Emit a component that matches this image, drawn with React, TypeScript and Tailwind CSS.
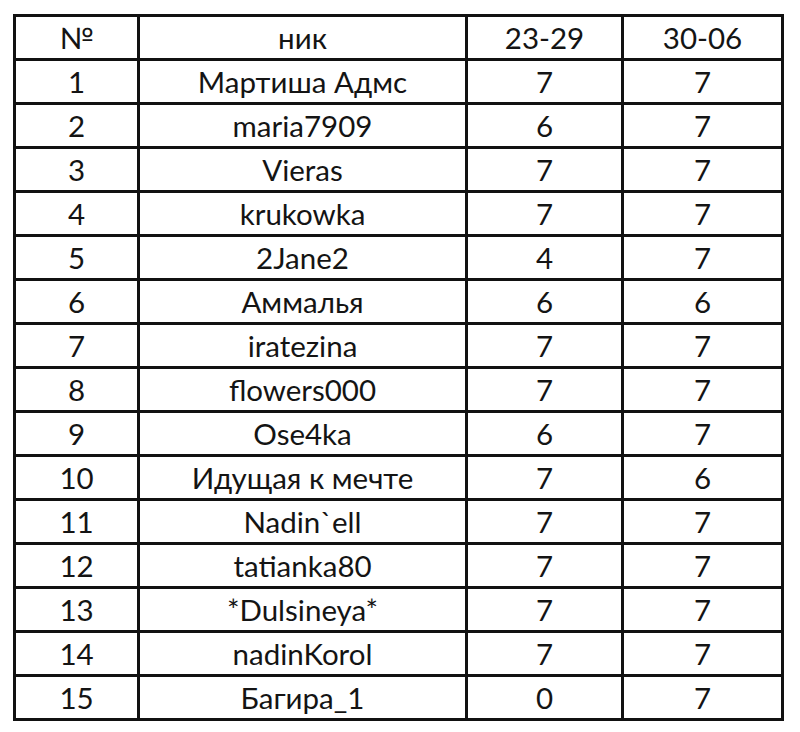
const rows: [string, string, string, string][] = [
  ["1", "Мартиша Адмс", "7", "7"],
  ["2", "maria7909", "6", "7"],
  ["3", "Vieras", "7", "7"],
  ["4", "krukowka", "7", "7"],
  ["5", "2Jane2", "4", "7"],
  ["6", "Аммалья", "6", "6"],
  ["7", "iratezina", "7", "7"],
  ["8", "flowers000", "7", "7"],
  ["9", "Ose4ka", "6", "7"],
  ["10", "Идущая к мечте", "7", "6"],
  ["11", "Nadin`ell", "7", "7"],
  ["12", "tatianka80", "7", "7"],
  ["13", "*Dulsineya*", "7", "7"],
  ["14", "nadinKorol", "7", "7"],
  ["15", "Багира_1", "0", "7"],
];

const cell = "border-[3px] border-[#111] h-[44px] p-0 text-center align-middle";

export default function App() {
  return (
    <div className="w-[800px] h-[732px] bg-white pt-[14px] pl-[13px] font-['Lato',sans-serif] text-[29.5px] leading-none text-[#141414]">
      <table className="border-collapse table-fixed w-[768px]">
        <colgroup>
          <col className="w-[124px]" />
          <col className="w-[328px]" />
          <col className="w-[156px]" />
          <col className="w-[160px]" />
        </colgroup>
        <thead>
          <tr>
            <th className={cell + " font-normal"}>№</th>
            <th className={cell + " font-normal"}>ник</th>
            <th className={cell + " font-normal"}>23-29</th>
            <th className={cell + " font-normal"}>30-06</th>
          </tr>
        </thead>
        <tbody>
          {rows.map((r) => (
            <tr key={r[0]}>
              {r.map((v, i) => (
                <td key={i} className={cell}>
                  {v}
                </td>
              ))}
            </tr>
          ))}
        </tbody>
      </table>
    </div>
  );
}
